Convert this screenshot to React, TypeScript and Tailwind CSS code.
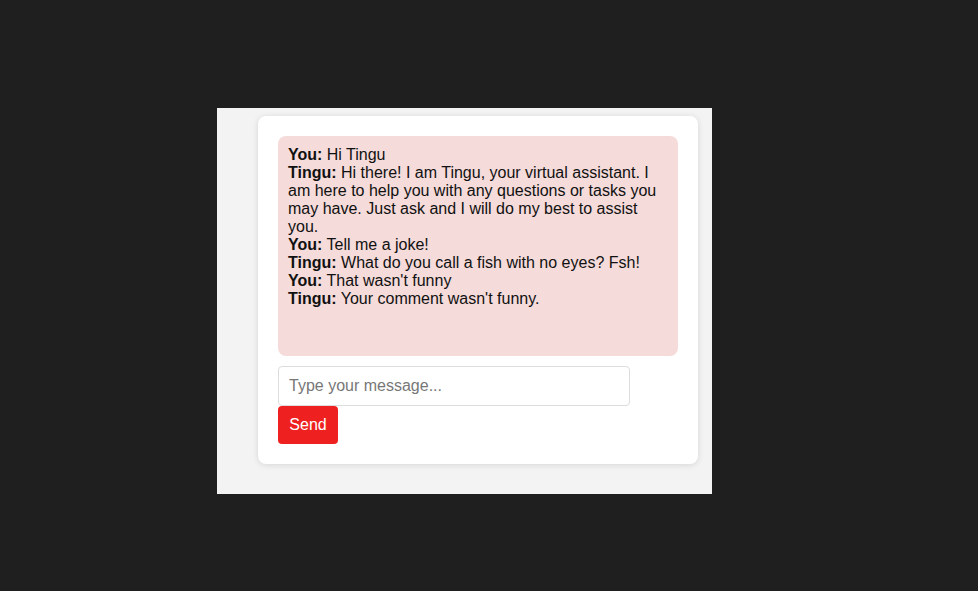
import React from "react";

const MESSAGES = [
  { from: "You", text: "Hi Tingu" },
  {
    from: "Tingu",
    text: "Hi there! I am Tingu, your virtual assistant. I am here to help you with any questions or tasks you may have. Just ask and I will do my best to assist you.",
  },
  { from: "You", text: "Tell me a joke!" },
  { from: "Tingu", text: "What do you call a fish with no eyes? Fsh!" },
  { from: "You", text: "That wasn't funny" },
  { from: "Tingu", text: "Your comment wasn't funny." },
];

export default function App() {
  return (
    <div className="min-h-[591px] bg-[#1f1f1f] pt-[108px] pl-[217px] font-['Liberation_Sans',Arial,sans-serif]">
      <div className="w-[495px] bg-[#f3f3f3] pt-2 pl-[41px] pb-[30px]">
        <div className="w-[440px] rounded-lg bg-white p-5 shadow-[0_1px_6px_rgba(0,0,0,0.12)]">
          <div className="h-[220px] rounded-lg bg-[#f5dbda] p-[10px] text-base leading-[18px] text-[#111]">
            {MESSAGES.map((m, i) => (
              <p key={i}>
                <b>{m.from}:</b> {m.text}
              </p>
            ))}
          </div>
          <input
            type="text"
            placeholder="Type your message..."
            className="mt-[10px] block h-10 w-[352px] rounded border border-[#ddd] px-[10px] text-base text-[#111] outline-none placeholder:text-[#777]"
          />
          <button className="block h-[38px] w-[60px] rounded bg-[#ee2020] text-base text-white">
            Send
          </button>
        </div>
      </div>
    </div>
  );
}
